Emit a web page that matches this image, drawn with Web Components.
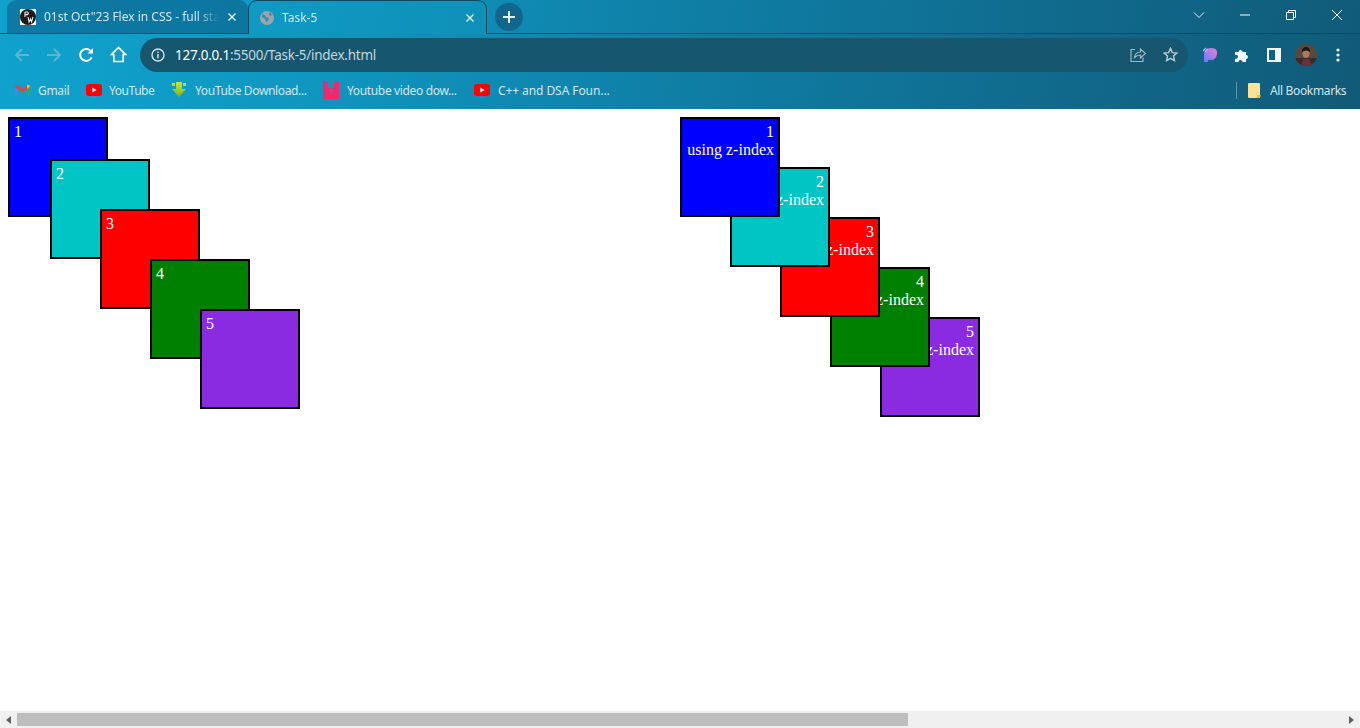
<!DOCTYPE html>
<html>
<head>
<meta charset="utf-8">
<title>Task-5</title>
<style>
  html, body { margin: 0; height: 100%; overflow: hidden; }
  body { display: flex; flex-direction: column; width: 1360px; height: 728px; background: #fff; font-family: "Liberation Serif", serif; }
  browser-bar { flex: none; }
  page-area { flex: 1; }
  page-scrollbar { flex: none; }
</style>
</head>
<body>

<browser-bar>
  <svg slot="tabicon1" width="16" height="16" viewBox="0 0 16 16">
    <rect width="16" height="16" fill="#fff"/>
    <circle cx="8" cy="8" r="8" fill="#1c1c1c"/>
    <path d="M5 3v5M5 3h2.500q1.500 1.200 0 2.600H5M8 8l1 5 1.500-3 1 3 1.500-5" fill="none" stroke="#eee" stroke-width="1.100"/>
  </svg>
  <svg slot="tabicon2" width="16" height="16" viewBox="0 0 16 16">
    <circle cx="8" cy="8" r="7" fill="#9aa6ad"/>
    <path d="M3 4l3 1 1 2 3 1-1 3-2 1-1-3-3-2zM10 2l3 2-1 2-2-1z" fill="#3f8cad"/>
  </svg>
</browser-bar>

<page-area>
  <box-stack>
    <stack-box color="#0000ff" x="0" y="0">1</stack-box>
    <stack-box color="#00c5c5" x="42" y="-58">2</stack-box>
    <stack-box color="#ff0000" x="92" y="-50">3</stack-box>
    <stack-box color="#008000" x="142" y="-50">4</stack-box>
    <stack-box color="#8a2be2" x="192" y="-50">5</stack-box>
  </box-stack>
  <box-stack>
    <stack-box color="#0000ff" x="0" y="0" z="5" end>1<br>using z-index</stack-box>
    <stack-box color="#00c5c5" x="50" y="-50" z="4" end>2<br>using z-index</stack-box>
    <stack-box color="#ff0000" x="100" y="-50" z="3" end>3<br>using z-index</stack-box>
    <stack-box color="#008000" x="150" y="-50" z="2" end>4<br>using z-index</stack-box>
    <stack-box color="#8a2be2" x="200" y="-50" z="1" end>5<br>using z-index</stack-box>
  </box-stack>
</page-area>

<page-scrollbar></page-scrollbar>

<script>
class BrowserTab extends HTMLElement {
  constructor() {
    super();
    this.attachShadow({ mode: "open" });
    this.shadowRoot.innerHTML = `
    <style>
    :host{
        display:flex;
        align-items:center;
        box-sizing:border-box;
        height:34px;
        padding-left:13px;
        padding-right:11px;
        gap:8px;
        border-radius:9px 9px 0 0;
        font:12px "Noto Sans", sans-serif;
        color:#d3e6ee;
        position:relative;
    }
    :host([active]){
        border:1px solid #0e4a60;
        border-bottom:none;
        color:#cfe6ef;
    }
    :host(:not([active])){
        background:rgba(10,70,110,.42);
        height:33px;
        align-self:flex-start;
    }
    span{
        flex:1;
        overflow:hidden;
        white-space:nowrap;
        -webkit-mask-image:linear-gradient(to left, transparent 0, #000 22px);
    }
    svg.close{ flex:none; }
    ::slotted(svg){ flex:none; }
    </style>
    <slot name="icon"></slot>
    <span><slot></slot></span>
    <svg class="close" width="10" height="10" viewBox="0 0 10 10"><path d="M1.500 1.500l7 7M8.500 1.500l-7 7" stroke="#e6f2f6" stroke-width="1.400"/></svg>
    `;
  }
}

class ToolButton extends HTMLElement {
  constructor() {
    super();
    this.attachShadow({ mode: "open" });
    this.shadowRoot.innerHTML = `
    <style>
    :host{
        display:flex;
        align-items:center;
        justify-content:center;
        width:32px;
        height:32px;
        flex:none;
    }
    </style>
    <slot></slot>
    `;
  }
}

class BookMark extends HTMLElement {
  constructor() {
    super();
    this.attachShadow({ mode: "open" });
    this.shadowRoot.innerHTML = `
    <style>
    :host{
        display:flex;
        align-items:center;
        gap:8px;
        flex:none;
        white-space:nowrap;
        font:12px "Noto Sans", sans-serif;
        letter-spacing:-.35px;
        color:#d3e6ee;
    }
    </style>
    <slot name="icon"></slot>
    <slot></slot>
    `;
  }
}

class BrowserBar extends HTMLElement {
  constructor() {
    super();
    this.attachShadow({ mode: "open" });
    const yt = `<svg slot="icon" width="16" height="12" viewBox="0 0 16 12"><rect width="16" height="12" rx="3" fill="#f00"/><path d="M6.300 3.500v5l4.300-2.500z" fill="#fff"/></svg>`;
    this.shadowRoot.innerHTML = `
    <style>
    :host{
        display:block;
        height:109px;
        background:linear-gradient(100deg, #0fa2cd 0%, #0f98c1 22%, #0f7fa6 50%, #10688a 80%, #115a78 100%);
    }
    #strip{
        display:flex;
        height:34px;
        box-sizing:border-box;
        padding-left:7px;
        border-bottom:1px solid #0e4a60;
    }
    browser-tab.first{ width:241px; }
    browser-tab.second{ width:239px; height:34px; margin-bottom:-1px; z-index:1; padding-left:10px; gap:7px; background:linear-gradient(100deg, #0f9ac4, #0f90b8); }
    #newtab{
        display:flex; align-items:center; justify-content:center;
        width:28px; height:28px; border-radius:50%;
        margin:3px 0 0 8px;
        background:#12668b;
    }
    #spacer{ flex:1; }
    .win{
        width:46px; height:29px;
        display:flex; align-items:center; justify-content:center;
    }
    #toolbar{
        display:flex;
        align-items:center;
        height:41px;
        padding-left:6px;
        padding-right:6px;
    }
    #omni{
        display:flex;
        align-items:center;
        flex:none;
        width:1048px;
        height:34px;
        margin-left:6px;
        margin-right:6px;
        box-sizing:border-box;
        padding-left:11px;
        padding-right:10px;
        border-radius:17px;
        background:#16566e;
        font:13.5px "Noto Sans", sans-serif;
        color:#c4d6de;
    }
    #omni b{ font-weight:400; color:#fff; }
    #url{ flex:1; margin-left:10px; letter-spacing:-.25px; }
    #omni svg.s{ margin-left:17px; }
    #bookmarks{
        display:flex;
        align-items:center;
        height:34px;
        padding-left:15px;
        padding-bottom:4px;
        box-sizing:border-box;
    }
    #divider{ width:1px; height:17px; background:#5d95aa; margin-left:626px; margin-right:11px; }
    </style>
    <div id="strip">
      <browser-tab class="first"><slot name="tabicon1" slot="icon"></slot>01st Oct"23 Flex in CSS - full stack</browser-tab>
      <browser-tab class="second" active><slot name="tabicon2" slot="icon"></slot>Task-5</browser-tab>
      <div id="newtab"><svg width="14" height="14" viewBox="0 0 14 14"><path d="M7 1v12M1 7h12" stroke="#e6f2f6" stroke-width="2"/></svg></div>
      <div id="spacer"></div>
      <div class="win"><svg width="12" height="8" viewBox="0 0 12 8"><path d="M1 1.500l5 5 5-5" fill="none" stroke="#e6f2f6" stroke-width="1"/></svg></div>
      <div class="win"><svg width="10" height="2" viewBox="0 0 10 2"><path d="M0 1h10" stroke="#fff" stroke-width="1"/></svg></div>
      <div class="win"><svg width="10" height="10" viewBox="0 0 10 10"><path d="M.500 2.500h7v7h-7zM2.500 2.500v-2h7v7h-2" fill="none" stroke="#fff" stroke-width="1"/></svg></div>
      <div class="win"><svg width="12" height="12" viewBox="0 0 12 12"><path d="M1 1l10 10M11 1L1 11" stroke="#fff" stroke-width="1"/></svg></div>
    </div>
    <div id="toolbar">
      <tool-button><svg width="16" height="16" viewBox="0 0 16 16"><path d="M15 8H2M8 2L2 8l6 6" fill="none" stroke="#5cb6d4" stroke-width="1.800"/></svg></tool-button>
      <tool-button><svg width="16" height="16" viewBox="0 0 16 16"><path d="M1 8h13M8 2l6 6-6 6" fill="none" stroke="#5cb6d4" stroke-width="1.800"/></svg></tool-button>
      <tool-button><svg width="16" height="16" viewBox="0 0 16 16"><path d="M13.600 10.500A6 6 0 1 1 12.400 3.600" fill="none" stroke="#fff" stroke-width="2"/><path d="M9.500 6.500H15V1z" fill="#fff"/></svg></tool-button>
      <tool-button><svg width="17" height="17" viewBox="0 0 17 17"><path d="M8.500 1.500L1.500 8.500h2.300v7h9.400v-7h2.300z" fill="none" stroke="#fff" stroke-width="1.700" stroke-linejoin="miter"/></svg></tool-button>
      <div id="omni">
        <svg width="14" height="14" viewBox="0 0 14 14"><circle cx="7" cy="7" r="6" fill="none" stroke="#d5e2e8" stroke-width="1.400"/><path d="M7 6v4.200M7 3.500v1.500" stroke="#d5e2e8" stroke-width="1.500"/></svg>
        <span id="url"><b>127.0.0.1</b>:5500/Task-5/index.html</span>
        <svg class="s" width="16" height="16" viewBox="0 0 16 16"><path d="M5 2.500H1v12h12v-4" fill="none" stroke="#9fb9c5" stroke-width="1.200"/><path d="M4.500 10.500C5 7 7.500 5 10.500 5V2l5 4.500-5 4.500V8C8 8 6 9 4.500 10.500z" fill="none" stroke="#9fb9c5" stroke-width="1.200"/></svg>
        <svg class="s" width="15" height="15" viewBox="0 0 16 16"><path d="M8 1.500l2 4.500 4.800.500-3.600 3.200 1 4.800L8 12.100l-4.200 2.400 1-4.800L1.200 6.500 6 6z" fill="none" stroke="#b9ccd5" stroke-width="1.500"/></svg>
      </div>
      <tool-button><svg width="16" height="16" viewBox="0 0 16 16"><defs><linearGradient id="pa" x1="0" y1="1" x2="1" y2="0"><stop offset="0" stop-color="#5f7cff"/><stop offset="1" stop-color="#ee7fd0"/></linearGradient></defs><path d="M2 15V7q0-6 7-6t6 6-6 6H6v2z" fill="url(#pa)"/><path d="M1 4l3-3M3 5l3-3" stroke="#d8a0f0" stroke-width="1.200"/></svg></tool-button>
      <tool-button><svg width="16" height="16" viewBox="0 0 16 16"><path d="M1 5h3.500a2 2 0 1 1 4 0H12v3a2 2 0 1 1 0 4v3H8.500a2 2 0 1 0-4 0H1v-3.500a2 2 0 1 0 0-3.500z" fill="#f0f8fa"/></svg></tool-button>
      <tool-button><svg width="14" height="14" viewBox="0 0 14 14"><path d="M0 0h14v14H0zM2 2v10h6V2z" fill="#f0f8fa" fill-rule="evenodd"/></svg></tool-button>
      <tool-button><svg width="22" height="22" viewBox="0 0 22 22"><defs><clipPath id="av"><circle cx="11" cy="11" r="11"/></clipPath></defs><g clip-path="url(#av)"><rect width="22" height="22" fill="#574a3c"/><rect y="14" width="22" height="8" fill="#3b2a2e"/><path d="M6 22l2-7h6l3 7z" fill="#6e2f3a"/><ellipse cx="11" cy="9.500" rx="3.600" ry="4.600" fill="#a87a5e"/><path d="M7 8q0-5 4-5t4 5q-4-3-8 0z" fill="#1d1512"/></g></svg></tool-button>
      <tool-button><svg width="4" height="14" viewBox="0 0 4 14"><circle cx="2" cy="2" r="1.600" fill="#f0f8fa"/><circle cx="2" cy="7" r="1.600" fill="#f0f8fa"/><circle cx="2" cy="12" r="1.600" fill="#f0f8fa"/></svg></tool-button>
    </div>
    <div id="bookmarks">
      <book-mark style="width:71px"><svg slot="icon" width="15" height="12" viewBox="0 0 15 12"><path d="M0 3v8h3V5z" fill="#4a86e8"/><path d="M12 5v6h3V3z" fill="#34a853"/><path d="M0 3q0-3 3-2l4.500 4L12 1q3-1 3 2l-3 2-4.500 3.500L3 5z" fill="#ea4335"/><path d="M12 1q3-1 3 2l-3 2z" fill="#fbbc04"/></svg>Gmail</book-mark>
      <book-mark style="width:85px;gap:7px;letter-spacing:-.45px">${yt}YouTube</book-mark>
      <book-mark style="width:152px"><svg slot="icon" width="16" height="16" viewBox="0 0 16 16"><defs><linearGradient id="dl" x1="0" y1="0" x2="0" y2="1"><stop offset="0" stop-color="#c8e63c"/><stop offset="1" stop-color="#7fb414"/></linearGradient></defs><path d="M1 1h3v3H1zM12 1h3v3h-3zM5 0h6v7h4l-7 8-7-8h4z" fill="url(#dl)"/></svg>YouTube Download...</book-mark>
      <book-mark style="width:151px"><svg slot="icon" width="16" height="18" viewBox="0 0 16 18"><path d="M1 0h4v7h6V0h4q1 0 1 1v16q0 1-1 1H1q-1 0-1-1V1q0-1 1-1z" fill="#f4266e"/><path d="M5 8h6l-3 5z" fill="#b0507a"/></svg>Youtube video dow...</book-mark>
      <book-mark style="width:136px;letter-spacing:-.08px">${yt}C++ and DSA Foun...</book-mark>
      <div id="divider"></div>
      <book-mark style="gap:9px"><svg slot="icon" width="13" height="15" viewBox="0 0 13 15"><path d="M0 1q0-1 1-1h10q1 0 1 1v14H1q-1 0-1-1z" fill="#fde293"/><path d="M9 15v-3h3.500v1.500L11 15z" fill="#f5b82e"/></svg>All Bookmarks</book-mark>
    </div>
    `;
  }
}

class StackBox extends HTMLElement {
  constructor() {
    super();
    this.attachShadow({ mode: "open" });
    this.shadowRoot.innerHTML = `
    <style>
    :host{
        display:block;
        box-sizing:border-box;
        width:100px;
        height:100px;
        padding:4px;
        border:2px solid #000;
        color:#fff;
        font:16px/18px "Liberation Serif", serif;
        position:relative;
    }
    :host([end]){ text-align:right; }
    </style>
    <slot></slot>
    `;
  }
  connectedCallback() {
    this.style.background = this.getAttribute("color");
    this.style.marginLeft = this.getAttribute("x") + "px";
    this.style.marginTop = this.getAttribute("y") + "px";
    if (this.hasAttribute("z")) this.style.zIndex = this.getAttribute("z");
  }
}

class BoxStack extends HTMLElement {
  constructor() {
    super();
    this.attachShadow({ mode: "open" });
    this.shadowRoot.innerHTML = `
    <style>
    :host{ display:flex; flex-direction:column; align-items:flex-start; }
    </style>
    <slot></slot>
    `;
  }
}

class PageArea extends HTMLElement {
  constructor() {
    super();
    this.attachShadow({ mode: "open" });
    this.shadowRoot.innerHTML = `
    <style>
    :host{
        display:flex;
        gap:380px;
        align-items:flex-start;
        padding:8px;
        overflow:hidden;
        background:#fff;
    }
    </style>
    <slot></slot>
    `;
  }
}

class PageScrollbar extends HTMLElement {
  constructor() {
    super();
    this.attachShadow({ mode: "open" });
    this.shadowRoot.innerHTML = `
    <style>
    :host{
        display:flex;
        align-items:center;
        height:17px;
        background:#f0f0f0;
    }
    .arrow{ width:17px; flex:none; display:flex; align-items:center; justify-content:center; }
    #track{ flex:1; height:13px; }
    #thumb{ width:891px; height:13px; background:#bebebe; }
    </style>
    <div class="arrow"><svg width="5" height="8" viewBox="0 0 5 8"><path d="M5 0v8L0 4z" fill="#606060"/></svg></div>
    <div id="track"><div id="thumb"></div></div>
    <div class="arrow"><svg width="5" height="8" viewBox="0 0 5 8"><path d="M0 0v8l5-4z" fill="#606060"/></svg></div>
    `;
  }
}

customElements.define("browser-tab", BrowserTab);
customElements.define("tool-button", ToolButton);
customElements.define("book-mark", BookMark);
customElements.define("browser-bar", BrowserBar);
customElements.define("stack-box", StackBox);
customElements.define("box-stack", BoxStack);
customElements.define("page-area", PageArea);
customElements.define("page-scrollbar", PageScrollbar);
</script>
</body>
</html>
